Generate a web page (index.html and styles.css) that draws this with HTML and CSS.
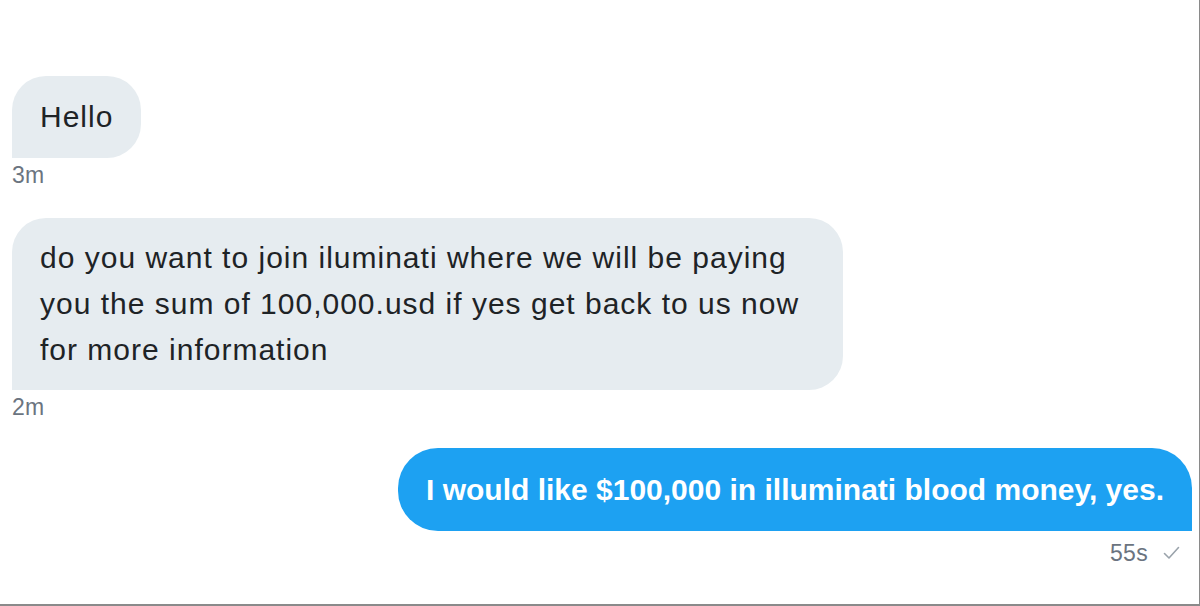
FILE: index.html
```html
<!DOCTYPE html>
<html>
<head>
<meta charset="utf-8">
<link rel="stylesheet" href="styles.css">
</head>
<body>
<div class="frame">
  <div class="thread">
    <div class="msg in">
      <div class="bubble">Hello</div>
      <div class="meta">3m</div>
    </div>
    <div class="msg in">
      <div class="bubble wide">do you want to join iluminati where we will be paying you the sum of 100,000.usd if yes get back to us now for more information</div>
      <div class="meta">2m</div>
    </div>
    <div class="msg out">
      <div class="bubble">I would like $100,000 in illuminati blood money, yes.</div>
      <div class="meta">55s <svg class="check" width="17" height="14" viewBox="0 0 17 14"><path d="M1.5 7.5 L6 12 L15.5 1.5" fill="none" stroke="#9aa3ab" stroke-width="1.6" stroke-linecap="round" stroke-linejoin="round"/></svg></div>
    </div>
  </div>
</div>
</body>
</html>
```
FILE: styles.css
```css
html, body {
  margin: 0;
  padding: 0;
  background: #fff;
}
.frame {
  box-sizing: border-box;
  width: 1200px;
  height: 606px;
  border-right: 1px solid #8a8a8a;
  border-bottom: 2px solid #8a8a8a;
  overflow: hidden;
  font-family: "Liberation Sans", Arial, sans-serif;
}
.thread {
  display: flex;
  flex-direction: column;
  gap: 31px;
  padding: 76px 7px 0 12px;
}
.msg {
  display: flex;
  flex-direction: column;
  align-items: flex-start;
}
.msg.out {
  align-items: flex-end;
  margin-top: -2px;
}
.bubble {
  box-sizing: border-box;
  padding: 18px 28px;
  font-size: 30px;
  line-height: 46px;
  letter-spacing: 1px;
  color: #1e2326;
  background: #e6ecf0;
  border-radius: 34px 34px 34px 0;
}
.bubble.wide {
  width: 831px;
  padding-top: 17px;
  padding-bottom: 17px;
}
.msg.out .bubble {
  background: #1da1f2;
  color: #fff;
  font-weight: bold;
  letter-spacing: 0;
  padding-top: 19px;
  padding-bottom: 18px;
  border-radius: 40px 40px 0 40px;
}
.meta {
  margin-top: 5px;
  font-size: 23px;
  line-height: 24px;
  letter-spacing: 0.3px;
  color: #6b7480;
}
.msg.out .meta {
  display: flex;
  align-items: center;
  gap: 15px;
  margin-top: 10px;
  padding-right: 12px;
}
.check {
  display: block;
}
```
